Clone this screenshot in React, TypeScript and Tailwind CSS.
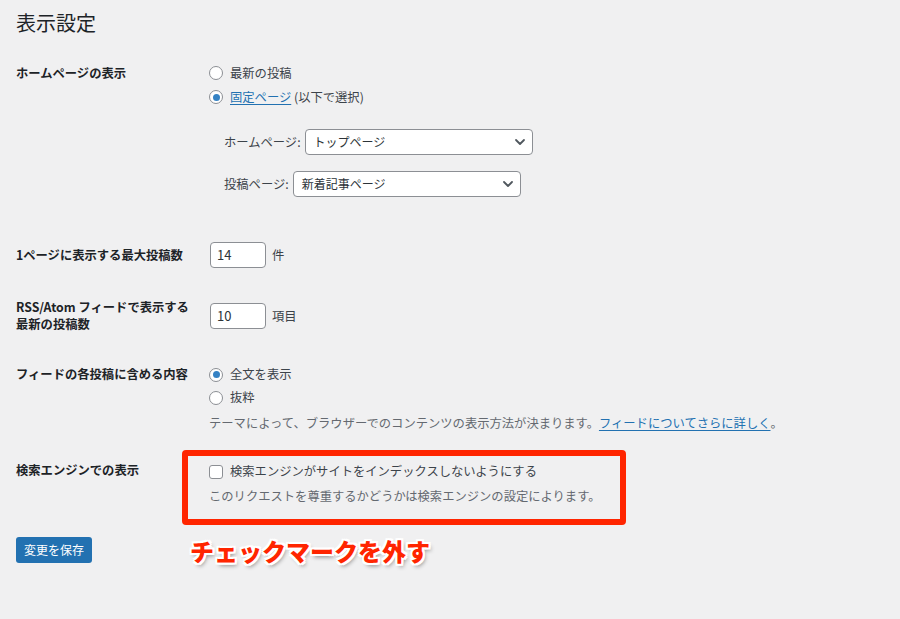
import React from "react";

function Radio({ checked = false }: { checked?: boolean }) {
  return (
    <span className="flex h-[14px] w-[14px] shrink-0 items-center justify-center rounded-full border border-[#8c8f94] bg-white">
      {checked && <span className="h-[7px] w-[7px] rounded-full bg-[#3582c4]" />}
    </span>
  );
}

function Chevron() {
  return (
    <svg width="12" height="8" viewBox="0 0 12 8" className="shrink-0">
      <path d="M2 2 L6 6 L10 2" fill="none" stroke="#50575e" strokeWidth="1.8" strokeLinecap="round" strokeLinejoin="round" />
    </svg>
  );
}

function Select({ value, width }: { value: string; width: string }) {
  return (
    <div
      className={`flex h-[26px] ${width} items-center justify-between rounded-[4px] border border-[#8c8f94] bg-white pl-2 pr-[6px] text-[12px] text-[#2c3338]`}
    >
      <span>{value}</span>
      <Chevron />
    </div>
  );
}

function NumberInput({ value }: { value: string }) {
  return (
    <div className="flex h-[26px] w-[56px] items-center rounded-[4px] border border-[#8c8f94] bg-white pl-[6px] text-[13px] text-[#2c3338]">
      {value}
    </div>
  );
}

export default function App() {
  return (
    <div className="relative min-h-[619px] w-[900px] overflow-hidden bg-[#f0f0f1] pl-4 pt-[9px] font-['Noto_Sans_CJK_JP','Noto_Sans',sans-serif] text-[12.3px] text-[#3c434a]">
      <h1 className="text-[20px] font-normal leading-[28px] text-[#1d2327]">表示設定</h1>

      {/* ホームページの表示 */}
      <div className="mt-6 flex items-start">
        <div className="w-[193px] shrink-0 font-bold leading-[24px] text-[#1d2327]">ホームページの表示</div>
        <div className="flex flex-col">
          <div className="flex h-[24px] items-center gap-[7px]">
            <Radio />
            <span>最新の投稿</span>
          </div>
          <div className="flex h-[24px] items-center gap-[7px]">
            <Radio checked />
            <span>
              <span className="text-[#2271b1] underline underline-offset-2">固定ページ</span> (以下で選択)
            </span>
          </div>
          <div className="ml-[15px] mt-5 flex items-center gap-[4px]">
            <span>ホームページ:</span>
            <Select value="トップページ" width="w-[228px]" />
          </div>
          <div className="ml-[15px] mt-4 flex items-center gap-[4px]">
            <span>投稿ページ:</span>
            <Select value="新着記事ページ" width="w-[228px]" />
          </div>
        </div>
      </div>

      {/* 1ページに表示する最大投稿数 */}
      <div className="mt-[45px] flex items-center">
        <div className="w-[194px] shrink-0 font-bold leading-[17px] text-[#1d2327]">1ページに表示する最大投稿数</div>
        <div className="flex items-center gap-[6px]">
          <NumberInput value="14" />
          <span>件</span>
        </div>
      </div>

      {/* RSS/Atom */}
      <div className="mt-[31px] flex items-center">
        <div className="w-[194px] shrink-0 font-bold leading-[17px] text-[#1d2327]">
          RSS/Atom フィードで表示する
          <br />
          最新の投稿数
        </div>
        <div className="flex items-center gap-[6px]">
          <NumberInput value="10" />
          <span>項目</span>
        </div>
      </div>

      {/* フィードの各投稿に含める内容 */}
      <div className="mt-[30px] flex items-start">
        <div className="w-[193px] shrink-0 font-bold leading-[23px] text-[#1d2327]">フィードの各投稿に含める内容</div>
        <div className="flex flex-col">
          <div className="flex h-[23px] items-center gap-[7px]">
            <Radio checked />
            <span>全文を表示</span>
          </div>
          <div className="flex h-[23px] items-center gap-[7px]">
            <Radio />
            <span>抜粋</span>
          </div>
          <p className="mt-[6px] leading-[17px] text-[#646970]">
            テーマによって、ブラウザーでのコンテンツの表示方法が決まります。
            <span className="text-[#2271b1] underline underline-offset-2">フィードについてさらに詳しく</span>。
          </p>
        </div>
      </div>

      {/* 検索エンジンでの表示 */}
      <div className="mt-[28px] flex items-start">
        <div className="w-[193px] shrink-0 font-bold leading-[21px] text-[#1d2327]">検索エンジンでの表示</div>
        <div className="flex flex-col">
          <div className="flex h-[23px] items-center gap-[7px]">
            <span className="h-[14px] w-[14px] shrink-0 rounded-[3px] border border-[#8c8f94] bg-white" />
            <span>検索エンジンがサイトをインデックスしないようにする</span>
          </div>
          <p className="mt-[5px] leading-[17px] text-[#646970]">
            このリクエストを尊重するかどうかは検索エンジンの設定によります。
          </p>
        </div>
      </div>

      <button
        type="button"
        className="mt-[32px] flex h-[26px] w-[76px] items-center justify-center rounded-[3px] bg-[#2271b1] text-[12px] text-white"
      >
        変更を保存
      </button>

      {/* annotation overlay */}
      <div className="absolute left-[182px] top-[450px] h-[75px] w-[444px] rounded-[4px] border-[6px] border-[#ff2500]" />
      <div className="absolute left-[190px] top-[536px] text-[24px] font-black leading-[30px] text-[#ff2500] [text-shadow:2px_0_0_#fff,-2px_0_0_#fff,0_2px_0_#fff,0_-2px_0_#fff,2px_2px_0_#fff,-2px_-2px_0_#fff,2px_-2px_0_#fff,-2px_2px_0_#fff,2px_3px_4px_rgba(0,0,0,0.45)]">
        チェックマークを外す
      </div>
    </div>
  );
}
